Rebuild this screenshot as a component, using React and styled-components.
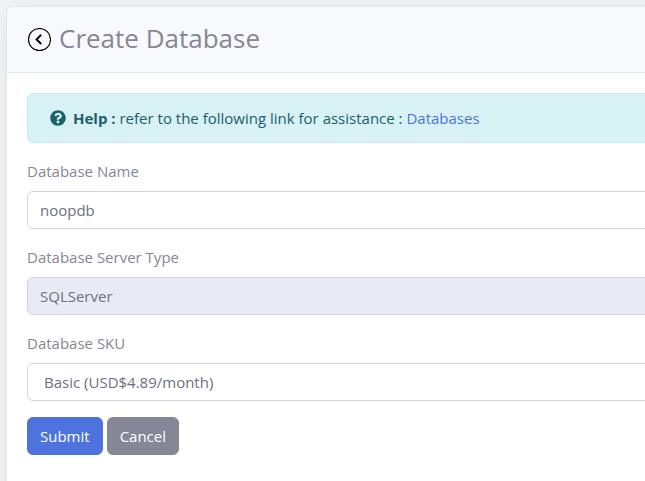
import React from "react";
import styled, { createGlobalStyle } from "styled-components";
import { FaQuestionCircle } from "react-icons/fa";

const GlobalStyle = createGlobalStyle`
  *, *::before, *::after { box-sizing: border-box; }
  body {
    margin: 0;
    overflow: hidden;
    background: #f4f5f8;
    color: #858796;
    font-family: "Segoe UI", "Open Sans", "Noto Sans", sans-serif;
    font-size: 15px;
    line-height: 24px;
  }
`;

const Page = styled.main`
  display: flex;
  min-height: 100vh;
  padding: 6px 0 0 6px;
  overflow: hidden;
`;

const Card = styled.section`
  flex: 1 0 auto;
  width: 100%;
  margin: 0 -48px -24px 0;
  border: 1px solid #e3e6f0;
  border-radius: 6px;
  background: #fff;
  box-shadow: 0 2px 28px rgba(58, 59, 69, 0.1);
`;

const CardHeader = styled.header`
  display: flex;
  align-items: center;
  gap: 8px;
  height: 66px;
  padding: 0 20px;
  border-bottom: 1px solid #e3e6f0;
  border-radius: 6px 6px 0 0;
  background: #f8f9fc;
`;

const BackLink = styled.a`
  display: flex;
  color: #000;
`;

const Title = styled.h1`
  margin: 0;
  padding-bottom: 4px;
  font-size: 26px;
  font-weight: 400;
  line-height: 32px;
`;

const CardBody = styled.form`
  padding: 20px;
`;

const Alert = styled.div`
  display: flex;
  align-items: center;
  gap: 7px;
  min-height: 50px;
  margin-bottom: 16px;
  padding: 12px 22px;
  border: 1px solid #c7ebf1;
  border-radius: 6px;
  background: #d7f1f5;
  color: #1c606a;
`;

const HelpLink = styled.a`
  color: #4e73df;
  text-decoration: none;
`;

const Field = styled.div`
  margin-bottom: 16px;
`;

const Label = styled.label`
  display: block;
  margin-bottom: 8px;
`;

const Input = styled.input`
  display: block;
  width: 100%;
  height: 38px;
  padding: 6px 12px;
  border: 1px solid #d1d3e2;
  border-radius: 6px;
  background: #fff;
  color: #6e707e;
  font: inherit;

  &:read-only {
    background: #e8ebf3;
  }
`;

const Select = styled.select`
  display: block;
  width: 100%;
  height: 38px;
  padding: 6px 16px;
  border: 1px solid #d1d3e2;
  border-radius: 6px;
  background: #fff;
  color: #6e707e;
  font: inherit;
  appearance: none;
`;

const Actions = styled.div`
  display: flex;
  gap: 4px;
`;

const Button = styled.button`
  height: 38px;
  padding: 0 12px;
  border: 1px solid ${({ $color }) => $color};
  border-radius: 6px;
  background: ${({ $color }) => $color};
  color: #fff;
  font: inherit;
`;

function BackIcon() {
  return (
    <svg width="24" height="24" viewBox="0 0 24 24" fill="none" stroke="currentColor" aria-hidden="true">
      <circle cx="12.5" cy="11.5" r="11" strokeWidth="1.1" />
      <path d="M14.2 6.8 9.6 11.4l4.6 4.6" strokeWidth="2" />
    </svg>
  );
}

export default function App() {
  return (
    <>
      <GlobalStyle />
      <Page>
        <Card>
          <CardHeader>
            <BackLink href="#back" aria-label="Back">
              <BackIcon />
            </BackLink>
            <Title>Create Database</Title>
          </CardHeader>
          <CardBody onSubmit={(event) => event.preventDefault()}>
            <Alert>
              <FaQuestionCircle size={16} aria-hidden="true" />
              <span>
                <strong>Help :</strong> refer to the following link for assistance :{" "}
                <HelpLink href="#databases">Databases</HelpLink>
              </span>
            </Alert>
            <Field>
              <Label htmlFor="database-name">Database Name</Label>
              <Input id="database-name" defaultValue="noopdb" />
            </Field>
            <Field>
              <Label htmlFor="server-type">Database Server Type</Label>
              <Input id="server-type" value="SQLServer" readOnly />
            </Field>
            <Field>
              <Label htmlFor="database-sku">Database SKU</Label>
              <Select id="database-sku">
                <option>Basic (USD$4.89/month)</option>
              </Select>
            </Field>
            <Actions>
              <Button type="submit" $color="#4e73df">Submit</Button>
              <Button type="button" $color="#858796">Cancel</Button>
            </Actions>
          </CardBody>
        </Card>
      </Page>
    </>
  );
}
